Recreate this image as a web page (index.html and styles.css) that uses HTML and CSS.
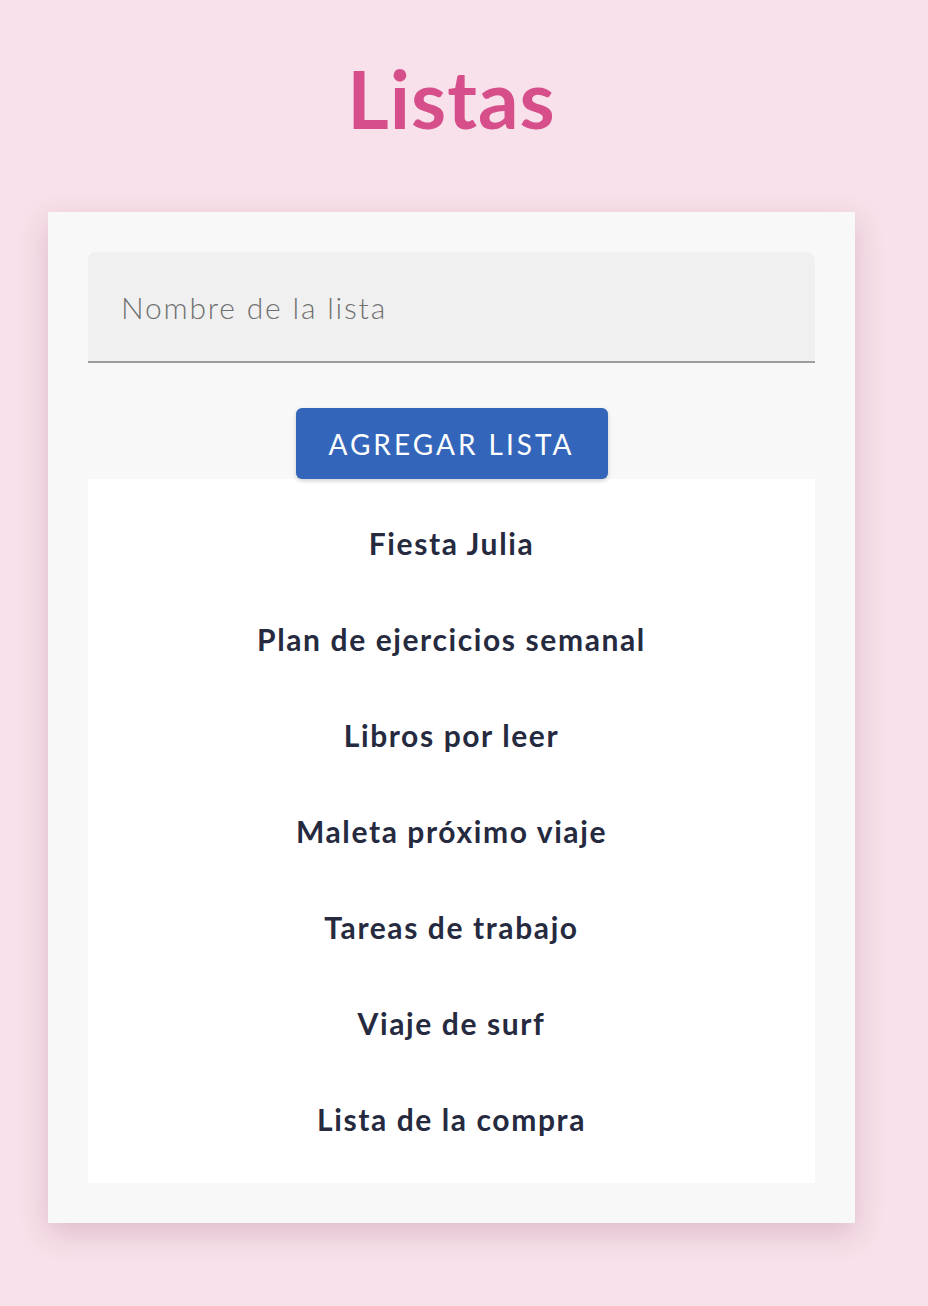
FILE: index.html
```html
<!DOCTYPE html>
<html lang="es">
<head>
<meta charset="utf-8">
<title>Listas</title>
<link rel="stylesheet" href="styles.css">
</head>
<body>
<main class="page">
  <h1 class="title">Listas</h1>
  <section class="card">
    <div class="field">
      <input class="field-input" type="text" placeholder="Nombre de la lista">
    </div>
    <div class="actions">
      <button class="btn" type="button">Agregar lista</button>
    </div>
    <ul class="lists">
      <li class="list-item">Fiesta Julia</li>
      <li class="list-item">Plan de ejercicios semanal</li>
      <li class="list-item">Libros por leer</li>
      <li class="list-item">Maleta próximo viaje</li>
      <li class="list-item">Tareas de trabajo</li>
      <li class="list-item">Viaje de surf</li>
      <li class="list-item">Lista de la compra</li>
    </ul>
  </section>
</main>
</body>
</html>
```

FILE: styles.css
```css
* { box-sizing: border-box; }
html, body {
  margin: 0;
  padding: 0;
  background: #f8e1ea;
  font-family: "Lato", "Noto Sans", sans-serif;
}
.page {
  width: 807px;
  margin-left: 48px;
  padding-top: 58px;
  padding-bottom: 80px;
}
.title {
  margin: 0 0 74px;
  text-align: center;
  font-size: 80px;
  line-height: 80px;
  font-weight: 700;
  letter-spacing: 1px;
  color: #d64f8a;
}
.card {
  background: #f8f8f8;
  padding: 40px;
  box-shadow: 0 10px 28px rgba(120, 60, 80, 0.22);
}
.field {
  background: #f0f0f0;
  border-radius: 8px 8px 0 0;
  border-bottom: 2px solid #9e9e9e;
  height: 111px;
  display: flex;
  align-items: center;
}
.field-input {
  width: 100%;
  border: 0;
  background: transparent;
  outline: none;
  padding: 0 33px;
  font-family: inherit;
  font-size: 30px;
  font-weight: 300;
  letter-spacing: 1.8px;
  color: #333;
}
.field-input::placeholder { color: #707070; }
.actions {
  display: flex;
  justify-content: center;
  padding-top: 45px;
}
.btn {
  width: 312px;
  height: 71px;
  border: 0;
  border-radius: 6px;
  background: #3366ba;
  color: #fff;
  font-family: inherit;
  font-size: 28px;
  font-weight: 400;
  letter-spacing: 3px;
  text-transform: uppercase;
  box-shadow: 0 2px 4px rgba(0, 0, 0, 0.18);
}
.lists {
  list-style: none;
  margin: 0;
  padding: 16px 0;
  background: #ffffff;
}
.list-item {
  height: 96px;
  display: flex;
  align-items: center;
  justify-content: center;
  font-size: 30px;
  font-weight: 700;
  letter-spacing: 1.6px;
  color: #262a3f;
}
```
